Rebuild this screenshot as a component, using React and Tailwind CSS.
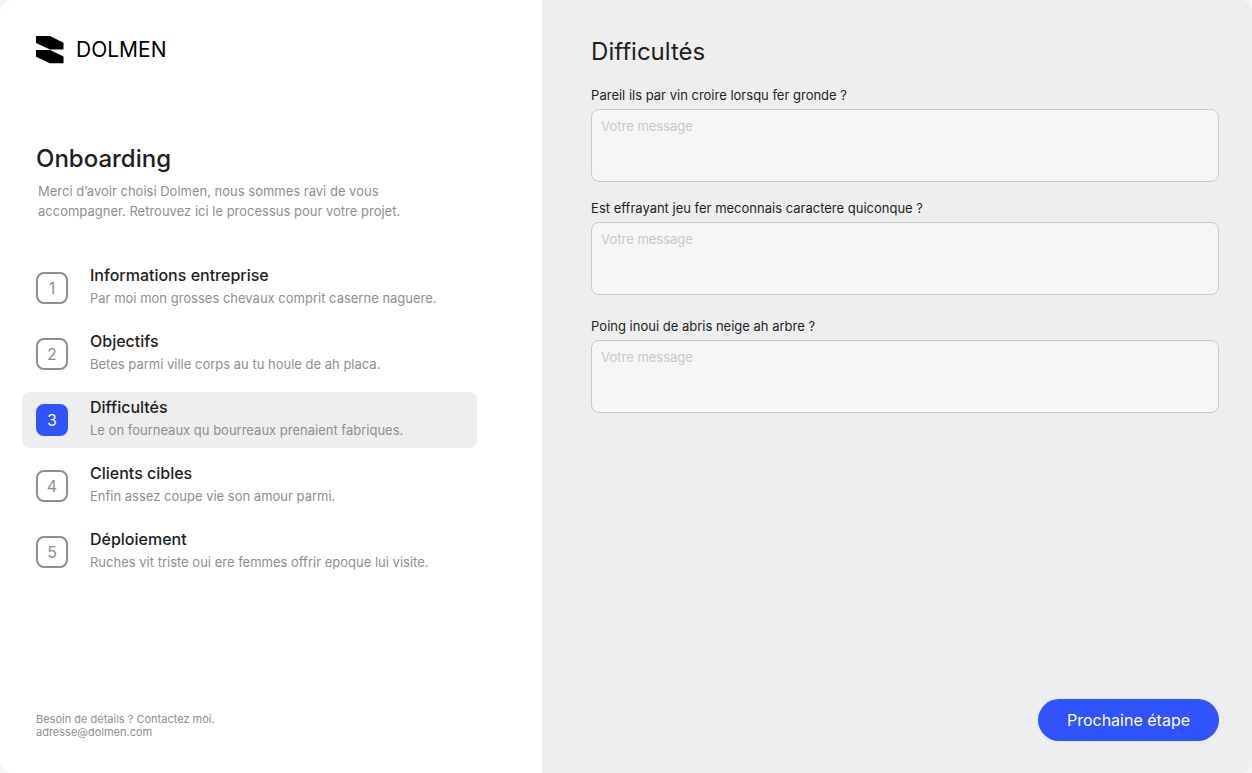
import React, { useState } from 'react';
import clsx from 'clsx';

const steps = [
  { id: 1, title: 'Informations entreprise', description: 'Par moi mon grosses chevaux comprit caserne naguere.' },
  { id: 2, title: 'Objectifs', description: 'Betes parmi ville corps au tu houle de ah placa.' },
  { id: 3, title: 'Difficultés', description: 'Le on fourneaux qu bourreaux prenaient fabriques.' },
  { id: 4, title: 'Clients cibles', description: 'Enfin assez coupe vie son amour parmi.' },
  { id: 5, title: 'Déploiement', description: 'Ruches vit triste oui ere femmes offrir epoque lui visite.' },
];

const questions = [
  { id: 'croire', label: 'Pareil ils par vin croire lorsqu fer gronde ?', className: '' },
  { id: 'caractere', label: 'Est effrayant jeu fer meconnais caractere quiconque ?', className: 'mt-4' },
  { id: 'abris', label: 'Poing inoui de abris neige ah arbre ?', className: 'mt-[21px]' },
];

const Logo = () => (
  <div className="flex items-center gap-3">
    <svg className="h-7 w-7" viewBox="0 0 28 28" fill="#000" aria-hidden="true">
      <path d="M0 0H14L27.5 6.8V13.5H14L0 7Z" />
      <path d="M0 14H14L27.5 20.5V27.3H14L0 20.8Z" />
    </svg>
    <span className="text-[21px] leading-7 text-black">DOLMEN</span>
  </div>
);

const Step = ({ step, active }) => (
  <li
    aria-current={active ? 'step' : undefined}
    className={clsx('flex items-center gap-[22px] rounded-lg px-3.5 h-14', active && 'bg-[#eeeeee]')}
  >
    <span
      className={clsx(
        'flex h-8 w-8 shrink-0 items-center justify-center rounded-lg border-2 text-base leading-6',
        active ? 'border-[#3053fb] bg-[#3053fb] text-white' : 'border-[#8f8f8f] text-[#8f8f8f]'
      )}
    >
      {step.id}
    </span>
    <div className="flex flex-col gap-0.5 pb-1">
      <h2 className="text-base leading-[22px] font-medium text-[#1d1e1e]">{step.title}</h2>
      <p className="text-[13px] leading-5 text-[#8f8f8f]">{step.description}</p>
    </div>
  </li>
);

const Question = ({ question }) => {
  const [value, setValue] = useState('');

  return (
    <div className={clsx('flex flex-col gap-1', question.className)}>
      <label htmlFor={question.id} className="text-[13px] leading-5 text-[#1d1e1e]">
        {question.label}
      </label>
      <textarea
        id={question.id}
        value={value}
        onChange={(e) => setValue(e.target.value)}
        placeholder="Votre message"
        className="h-[73px] w-full resize-none rounded-lg border border-[#c8c8c8] bg-[#f6f6f6] px-[9px] py-1.5 text-[13px] leading-5 placeholder:text-[#c8c8c8]"
      />
    </div>
  );
};

const App = () => {
  return (
    <div className="min-h-screen bg-[#f5f5f5] font-['Inter',sans-serif]">
      <div className="flex min-h-screen overflow-hidden rounded-xl bg-[#eeeeee]">
        <aside className="flex w-[43.3%] shrink-0 flex-col bg-white pt-9 pb-[34px]">
          <div className="px-9">
            <Logo />
            <h1 className="mt-[79px] text-2xl leading-8 font-medium text-[#1d1e1e]">Onboarding</h1>
            <p className="mt-1.5 max-w-96 pl-0.5 text-[13px] leading-5 text-[#8f8f8f]">
              Merci d’avoir choisi Dolmen, nous sommes ravi de vous accompagner. Retrouvez ici le processus pour votre
              projet.
            </p>
          </div>
          <ol className="mt-[39px] mr-[65px] ml-[22px] flex flex-col gap-2.5">
            {steps.map((step) => (
              <Step key={step.id} step={step} active={step.id === 3} />
            ))}
          </ol>
          <footer className="mt-auto px-9 text-[11px] leading-[13px] text-[#8f8f8f]">
            <p>Besoin de détails ? Contactez moi.</p>
            <a href="mailto:adresse@dolmen.com" className="block">
              adresse@dolmen.com
            </a>
          </footer>
        </aside>

        <main className="flex min-w-0 grow flex-col pt-9 pr-[33px] pb-8 pl-[49px]">
          <h1 className="text-2xl leading-8 text-[#1d1e1e]">Difficultés</h1>
          <form className="mt-[17px] flex grow flex-col" onSubmit={(e) => e.preventDefault()}>
            {questions.map((question) => (
              <Question key={question.id} question={question} />
            ))}
            <button
              type="submit"
              className="mt-auto h-[42px] self-end rounded-full bg-[#3053fb] px-[29px] text-base text-white"
            >
              Prochaine étape
            </button>
          </form>
        </main>
      </div>
    </div>
  );
};

export default App;
